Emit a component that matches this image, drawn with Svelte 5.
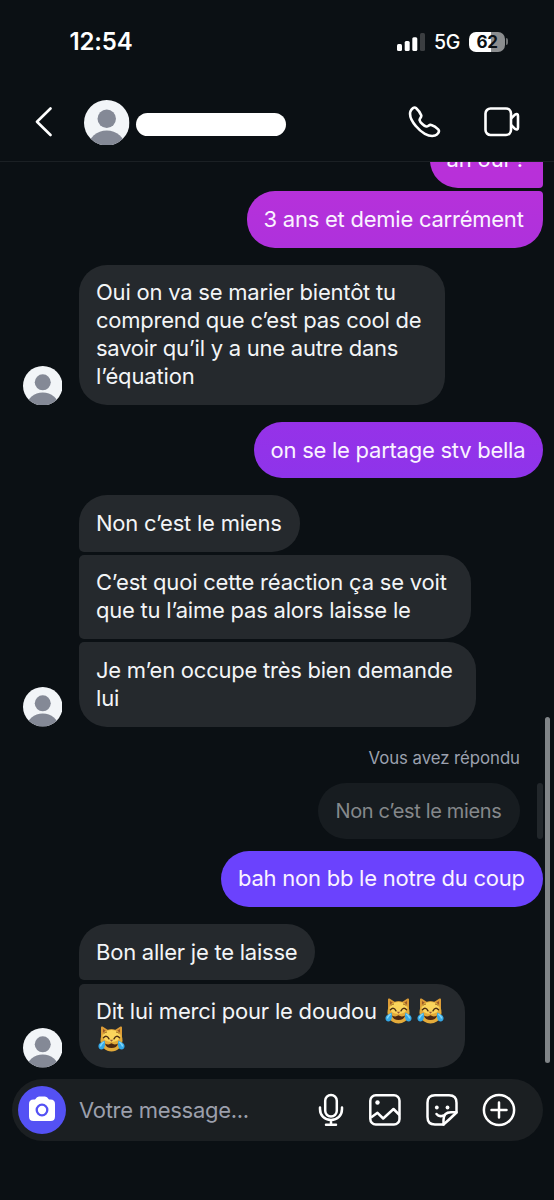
<script>
  const groups = [
    { side: 'out', gap: 0, items: [
      { lines: ['ah oui ?'], w: 113, r: '28px 4px 4px 28px', bg: 'linear-gradient(#bb30d9,#b730d9)', ls: [-0.15] },
      { lines: ['3 ans et demie carrément'], w: 296, r: '28px 4px 28px 28px', bg: 'linear-gradient(#b631da,#ae31dc)', ls: [-0.24] },
    ] },
    { side: 'in', gap: 17, items: [
      { lines: ['Oui on va se marier bientôt tu', 'comprend que c’est pas cool de', 'savoir qu’il y a une autre dans', 'l’équation'], w: 366, r: '28px', ls: [-0.22, -0.23, -0.25, -0.15] },
    ] },
    { side: 'out', gap: 17, items: [
      { lines: ['on se le partage stv bella'], w: 289, r: '28px', bg: 'linear-gradient(#9632e8,#8e34ea)', ls: [-0.25] },
    ] },
    { side: 'in', gap: 17, items: [
      { lines: ['Non c’est le miens'], w: 221, r: '28px 28px 28px 5px', ls: [-0.22] },
      { lines: ['C’est quoi cette réaction ça se voit', 'que tu l’aime pas alors laisse le'], w: 392, r: '5px 28px 28px 5px', ls: [-0.2, -0.22] },
      { lines: ['Je m’en occupe très bien demande', 'lui'], w: 397, r: '5px 28px 28px 28px', ls: [-0.24, -0.2] },
    ] },
    { side: 'reply', label: 'Vous avez répondu', quote: 'Non c’est le miens' },
    { side: 'out', gap: 11.5, items: [
      { lines: ['bah non bb le notre du coup'], w: 321.5, r: '28px', bg: '#6b42fd', ls: [-0.24] },
    ] },
    { side: 'in', gap: 17, items: [
      { lines: ['Bon aller je te laisse'], w: 236, r: '28px 28px 28px 5px', ls: [-0.23] },
      { lines: ['Dit lui merci pour le doudou ', ''], cats: [2, 1], w: 386, r: '5px 28px 28px 28px', ls: [-0.2, 0] },
    ] },
  ];
</script>

{#snippet avatar(size)}
  <svg class="avatar" width={size} height={size} viewBox="0 0 40 40">
    <defs><clipPath id="face"><circle cx="20" cy="20" r="20" /></clipPath></defs>
    <g clip-path="url(#face)">
      <rect width="40" height="40" fill="#f2f5f8" />
      <circle cx="20" cy="16.500" r="8.100" fill="#848996" />
      <ellipse cx="20" cy="41" rx="16" ry="14.200" fill="#848996" />
    </g>
  </svg>
{/snippet}

{#snippet cat()}
  <svg class="cat" width="27" height="27" viewBox="0 0 27 27">
    <path d="M3 14 3 2.6Q3 1 4.5 1.6L10 5Q13.5 4 17 5L22.500 1.600Q24 1 24 2.600L24 14Z" fill="#dc9c37" />
    <path d="M5 8V4l4 2.500zM22 8V4l-4 2.500z" fill="#9c5b29" />
    <path d="M13.500 4.300C20 4.300 24.500 9 24.500 15.500S19 26.500 13.500 26.500 2.500 22 2.500 15.500 7 4.300 13.500 4.300Z" fill="#e3aa3a" />
    <ellipse cx="13.500" cy="11" rx="9" ry="6" fill="#fad45c" />
    <path d="M5.500 8.800Q7 7 9 7M21.500 8.800Q20 7 18 7" stroke="#9a641e" stroke-width="1" fill="none" />
    <path d="M5.500 12.800Q8.500 9.400 11 13.800M21.500 12.800Q18.500 9.400 16 13.800" stroke="#4b2c13" stroke-width="1.400" fill="none" stroke-linecap="round" />
    <path d="M11.800 14.800h3.400l-1.700 2z" fill="#94523a" />
    <path d="M7 18.500Q10.500 20.500 13.500 18.300 16.500 20.500 20 18.500 19 23 13.500 23T7 18.500Z" fill="#4c2811" />
    <path d="M6.500 15.500C7.500 18 7.300 24.500 3.500 24.500 0 24.500-.5 20 2 18.300ZM20.500 15.500C19.500 18 19.700 24.500 23.500 24.500 27 24.500 27.500 20 25 18.300Z" fill="#35a8e6" />
    <path d="M5.700 17Q3 19 2.300 21.500M21.300 17Q24 19 24.700 21.500" stroke="#83d8fa" stroke-width="1.500" fill="none" />
  </svg>
{/snippet}

<div class="phone">
  <header>
    <div class="status">
      <span class="time">12:54</span>
      <div class="signal">
        <svg width="28" height="18" viewBox="0 0 28 18" fill="#fff">
          <rect x="0" y="11" width="5" height="7" rx="1.500" />
          <rect x="7.700" y="8" width="5" height="10" rx="1.500" />
          <rect x="15.300" y="4.300" width="5" height="13.700" rx="1.500" />
          <rect x="23" y="0" width="5" height="18" rx="1.500" fill="#3b3e41" />
        </svg>
        <span class="net">5G</span>
        <div class="battery"><span>62</span></div>
        <i class="nub"></i>
      </div>
    </div>
    <div class="nav">
      <svg class="back" width="18" height="30" viewBox="0 0 18 30" fill="none" stroke="#fff" stroke-width="2.600" stroke-linecap="round" stroke-linejoin="round"><path d="M15.500 1.500 2 14.700l13.500 13.300" /></svg>
      {@render avatar(45.5)}
      <div class="name"></div>
      <svg class="call" width="34" height="34" viewBox="0 0 34 34" fill="none" stroke="#fff" stroke-width="2.600" stroke-linejoin="round">
        <path d="M3.400 6.500C4.500 3.600 7.200 1.600 9 3c2.200 2 4.500 5.500 5.200 7.200.8 2.200-2 3.200-1.600 5 .5 2.200 4.500 5.900 6.700 6.300 2 .3 2.600-2.300 5-1.500 2 .6 5.200 2.600 6.900 4.300 2 2.100-.5 5.300-3.300 6.300-6.200 1.900-14.300-3.600-18.800-9.300C5 16.500 2.200 10.500 3.400 6.500Z" />
      </svg>
      <svg class="video" width="36" height="30" viewBox="0 0 36 30" fill="none" stroke="#fff" stroke-width="2.600" stroke-linejoin="round">
        <rect x="1.500" y="1.500" width="25.500" height="26.500" rx="5" />
        <path d="M27 11.500 31 7.600Q34 6 34 9V20.500Q34 23.500 31 21.900L27 18" />
      </svg>
    </div>
  </header>

  <main>
    {#each groups as g}
      {#if g.side === 'reply'}
        <div class="reply">
          <div class="label">{g.label}</div>
          <div class="quoted"><div class="quote">{g.quote}</div><i></i></div>
        </div>
      {:else}
        <section class={g.side} style:margin-top="{g.gap}px">
          {#if g.side === 'in'}{@render avatar(39.5)}{/if}
          <div class="stack">
            {#each g.items as m}
              <div class="bubble" style:width="{m.w}px" style:border-radius={m.r} style:background={m.bg}>
                {#each m.lines as line, i}
                  <div class="line"><span style:letter-spacing="{m.ls[i]}px">{line}</span>{#if m.cats}{#each Array(m.cats[i]) as _}{@render cat()}{/each}{/if}</div>
                {/each}
              </div>
            {/each}
          </div>
        </section>
      {/if}
    {/each}
    <div class="scrollbar"></div>
  </main>

  <footer>
    <div class="camera">
      <svg width="28" height="26" viewBox="0 0 28 26">
        <path d="M5.500 3.500H7Q9 0.500 11 .5H17Q19 .5 21 3.500H22.500Q27 3.500 27 8V20.500Q27 25 22.500 25H5.500Q1 25 1 20.500V8Q1 3.500 5.500 3.500Z" fill="#fff" />
        <circle cx="14" cy="14" r="5.300" fill="none" stroke="#5451f4" stroke-width="2.300" />
      </svg>
    </div>
    <span class="placeholder">Votre message...</span>
    <div class="tools">
      <svg width="26" height="34" viewBox="0 0 26 34" fill="none" stroke="#fff" stroke-width="2.500" stroke-linecap="round">
        <rect x="7.200" y="2" width="11.600" height="21.500" rx="5.800" /><path d="M2 14.500V16c0 6.500 4.500 11 11 11s11-4.500 11-11v-1.500M13 27v4M8 31.700h10" />
      </svg>
      <svg width="32" height="34" viewBox="0 0 32 34" fill="none" stroke="#fff" stroke-width="2.500" stroke-linejoin="round">
        <rect x="1.300" y="2.300" width="29.200" height="29.200" rx="5.500" /><circle cx="8.500" cy="9.500" r="2.200" fill="#fff" stroke="none" /><path d="M2 24.500 8.500 19.800l5.700 5.700 10.300-9.500 6 6" />
      </svg>
      <svg width="32" height="34" viewBox="0 0 32 34" fill="none" stroke="#fff" stroke-width="2.500" stroke-linejoin="round" stroke-linecap="round">
        <path d="M17.500 31.500H9C4 31.500 1.500 29 1.500 24V9.800C1.500 4.800 4 2.300 9 2.300h14C28 2.300 30.500 4.800 30.500 9.800V19.500Q24.500 25.500 17.500 31.500Z" /><path d="M17.500 31.500V27C17.500 21.500 20.500 19.300 25 19.300h5.500" /><path d="M10.500 21c2 2.500 4 2.700 7 1.500" /><circle cx="10.800" cy="14.500" r="1.900" fill="#fff" stroke="none" /><circle cx="21.500" cy="14.500" r="1.900" fill="#fff" stroke="none" />
      </svg>
      <svg width="34" height="34" viewBox="0 0 34 34" fill="none" stroke="#fff" stroke-width="2.500" stroke-linecap="round"><circle cx="17" cy="17" r="15.100" /><path d="M17 9.500v15M9.500 17h15" /></svg>
    </div>
  </footer>
</div>

<style>
  :global(body) { background: #0b1014; }
  .phone { width: 554px; height: 1200px; background: #0b1014; color: #f3f5f7; font-family: Inter, "Liberation Sans", sans-serif; overflow: hidden; display: flex; flex-direction: column; }
  svg { display: block; flex: none; }
  header { height: 162px; box-sizing: border-box; border-bottom: 1px solid #1b2024; flex: none; }
  .status { height: 83px; display: flex; align-items: center; padding-left: 69.500px; }
  .time { width: 327.500px; font-size: 24px; font-weight: 560; color: #fff; letter-spacing: -.15px; }
  .signal { display: flex; align-items: center; }
  .net { font-size: 19.500px; margin: 1px 0 0 9px; width: 35px; color: #fff; letter-spacing: -.3px; font-weight: 450; }
  .battery { width: 36px; height: 20px; border-radius: 7px; background: linear-gradient(90deg, #fff 62%, #8b8d8f 62%); color: #0b1014; font-size: 17px; line-height: 20px; text-align: center; font-weight: 700; letter-spacing: -.3px; }
  .nub { width: 2px; height: 7px; border-radius: 0 2px 2px 0; background: #6d7072; margin-left: 1px; }
  .nav { display: flex; align-items: center; height: 78.500px; padding-left: 35px; }
  .back { margin-right: 31px; }
  .name { width: 150px; height: 23px; border-radius: 12px; background: #fff; margin: 5px 0 0 6.500px; }
  .call { margin-left: 120.500px; }
  .video { margin-left: 43.500px; }
  main { flex: none; height: 917px; overflow: hidden; position: relative; }
  main > section:first-child { margin-top: -30.100px !important; }
  section { display: flex; }
  .out { justify-content: flex-end; padding-right: 11.500px; }
  .in { padding-left: 22.500px; align-items: flex-end; gap: 17px; }
  .stack { display: flex; flex-direction: column; align-items: flex-start; gap: 3.100px; }
  .out .stack { align-items: flex-end; }
  .bubble { box-sizing: border-box; padding: 13.400px 0 14.800px 17px; background: #25292d; font-size: 22px; line-height: 28.100px; white-space: pre; }
  .line { display: flex; height: 28.100px; align-items: center; }
  .cat { margin: 0 3.500px 0 2px; position: relative; top: -1px; }
  .out .bubble { color: #faf3ff; }
  .reply { padding-right: 11px; }
  .label { text-align: right; font-size: 16.800px; line-height: 20px; margin: 21.600px 23px 0 0; color: #9ba0ae; letter-spacing: -.05px; }
  .quoted { display: flex; justify-content: flex-end; gap: 17px; margin-top: 15.200px; }
  .quote { width: 202px; height: 56px; border-radius: 28px; background: #171c20; color: #85888b; font-size: 20px; line-height: 57px; padding-left: 17.500px; box-sizing: border-box; white-space: nowrap; letter-spacing: -.35px; }
  .quoted i { width: 6px; background: #22272b; border-radius: 3px; }
  .scrollbar { position: absolute; left: 545px; top: 555px; width: 4.500px; height: 346px; border-radius: 3px; background: #818588; }
  footer { width: 531px; height: 62px; border-radius: 31px; background: #1b1f22; margin-left: 11.500px; display: flex; align-items: center; box-sizing: border-box; padding-left: 6.500px; flex: none; }
  .camera { width: 48px; height: 48px; border-radius: 50%; background: #5451f4; display: grid; place-items: center; flex: none; }
  .camera svg { margin-top: -3px; }
  .placeholder { font-size: 22px; color: #9b9fac; margin: -1px 0 0 13px; width: 239px; white-space: nowrap; letter-spacing: -.28px; }
  .tools { display: flex; align-items: center; margin-top: -1px; }
  .tools svg:nth-child(2) { margin-left: 25px; }
  .tools svg:nth-child(3) { margin-left: 25px; }
  .tools svg:nth-child(4) { margin-left: 24px; }
</style>
